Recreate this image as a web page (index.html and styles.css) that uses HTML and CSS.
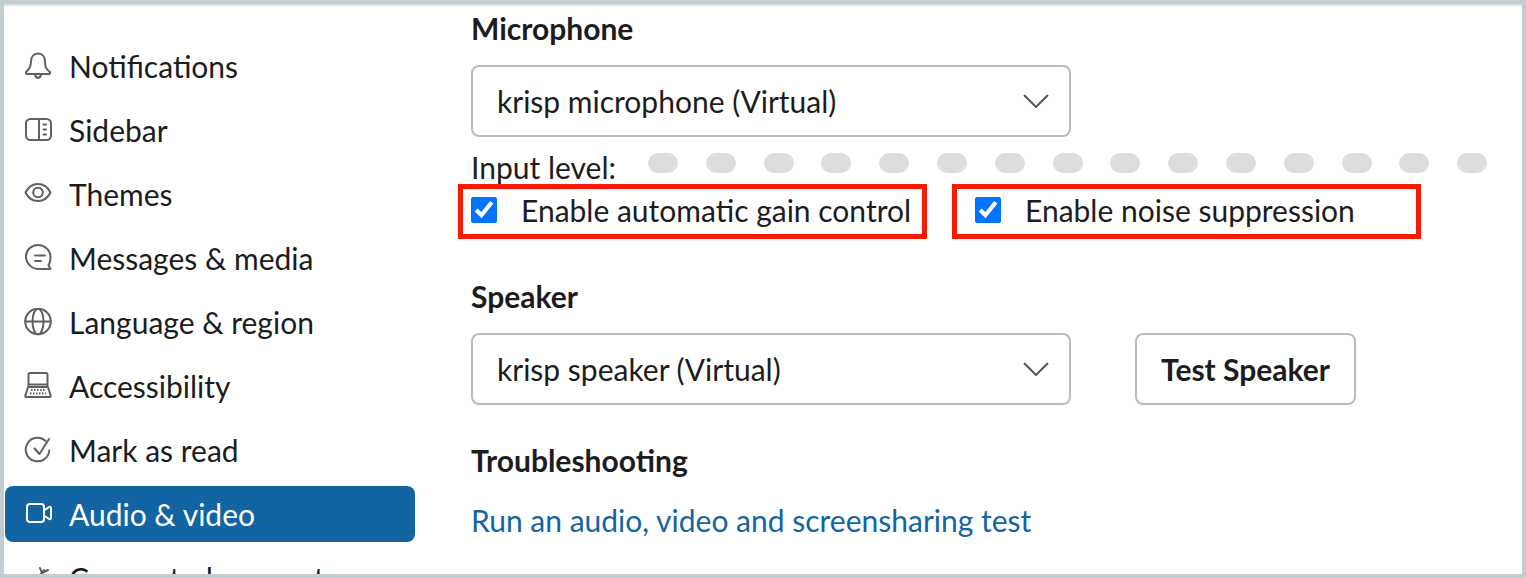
FILE: index.html
```html
<!DOCTYPE html>
<html lang="en">
<head>
<meta charset="utf-8">
<title>Preferences</title>
<link rel="stylesheet" href="styles.css">
</head>
<body>
<div class="frame">
  <nav class="sidebar">
    <a class="nav-item"><svg class="icon" viewBox="0 0 28 28"><path d="M14 1.500c-4.500 0-7 3.500-7 8 0 5.500-2 7.500-4.800 10.500-.7.800-.2 2 .8 2h22c1 0 1.500-1.200.8-2C22 17 21 15 21 9.500c0-4.500-2.500-8-7-8zM11 22.500c.3 2 1.400 3.300 3 3.300s2.700-1.300 3-3.300"/></svg><span>Notifications</span></a>
    <a class="nav-item"><svg class="icon" viewBox="0 0 28 28"><rect x="2" y="3" width="25" height="21" rx="4.500"/><path d="M15 3v21M19.500 8.500h2.500M19.500 13.500h2.500M19.500 18.500h2.500"/></svg><span>Sidebar</span></a>
    <a class="nav-item"><svg class="icon" viewBox="0 0 28 28"><path d="M1.500 12.500C4.500 6.500 9 4 14 4s9.500 2.500 12.500 8.500c-3 6-7.500 8.500-12.500 8.500S4.500 18.500 1.500 12.500z"/><circle cx="14" cy="12.500" r="4.800"/></svg><span>Themes</span></a>
    <a class="nav-item"><svg class="icon" viewBox="0 0 28 28"><path d="M14 1C7.500 1 2 6 2 12.500S7.500 25 14 25h12.500l-2-3.800c1.400-2.300 2-5 2-8.200C26.500 6 20.500 1 14 1z"/><path d="M11 11.500h10M11 17h6"/></svg><span>Messages &amp; media</span></a>
    <a class="nav-item"><svg class="icon" viewBox="0 0 28 28"><circle cx="14" cy="13.500" r="12.800"/><ellipse cx="14" cy="13.500" rx="5.500" ry="12.800"/><path d="M1.500 13.500h25"/></svg><span>Language &amp; region</span></a>
    <a class="nav-item"><svg class="icon" viewBox="0 0 28 28"><path d="M4.500 15V2.500c0-1 .5-1.500 1.500-1.500h16c1 0 1.500.5 1.500 1.500V15M1.200 24l2.800-9h20l2.800 9c0 .5-.3 1-1 1H2.200c-.7 0-1-.5-1-1zM4.500 12.500h19"/><path class="dots" d="M7 18h14M6 21.500h16"/></svg><span>Accessibility</span></a>
    <a class="nav-item"><svg class="icon" viewBox="0 0 28 28"><path d="M21.500 4.800A11.800 11.800 0 1 0 25.300 14.500"/><path d="M10.500 12.500L15.500 18 25 3"/></svg><span>Mark as read</span></a>
    <a class="nav-item active"><svg class="icon" viewBox="0 0 28 28"><rect x="3" y="4" width="17" height="18" rx="3"/><path d="M20 10.500l5-3.500c.8-.5 2 0 2 .8v10.400c0 .8-1.200 1.300-2 .8l-5-3.500"/></svg><span>Audio &amp; video</span></a>
    <a class="nav-item"><svg class="icon" viewBox="0 0 28 28"><path d="M4 26L20 6M16 4l2 5 6-3"/></svg><span>Connected accounts</span></a>
  </nav>
  <main class="content">
    <h2 class="heading first">Microphone</h2>
    <div class="select"><span>krisp microphone (Virtual)</span><svg class="chevron" viewBox="0 0 26 14"><path d="M1 1L13 13 25 1"/></svg></div>
    <div class="level">
      <span class="level-label">Input level:</span>
      <div class="dots-row">
        <i></i><i></i><i></i><i></i><i></i><i></i><i></i><i></i><i></i><i></i><i></i><i></i><i></i><i></i><i></i>
      </div>
    </div>
    <div class="options">
      <label class="option"><input type="checkbox" checked><span>Enable automatic gain control</span></label>
      <label class="option second"><input type="checkbox" checked><span>Enable noise suppression</span></label>
    </div>
    <h2 class="heading speaker">Speaker</h2>
    <div class="speaker-row">
      <div class="select"><span>krisp speaker (Virtual)</span><svg class="chevron" viewBox="0 0 26 14"><path d="M1 1L13 13 25 1"/></svg></div>
      <button class="test-btn">Test Speaker</button>
    </div>
    <h2 class="heading trouble">Troubleshooting</h2>
    <a class="link">Run an audio, video and screensharing test</a>
  </main>
</div>
</body>
</html>
```
FILE: styles.css
```css
* { box-sizing: border-box; }
html, body { margin: 0; height: 100%; }
body {
  font-family: Lato, "Liberation Sans", sans-serif;
  color: #1d1c1d;
  overflow: hidden;
}
.frame {
  width: 1526px;
  height: 578px;
  border: 4px solid #c1cdd1;
  background: #fff;
  display: flex;
  overflow: hidden;
}
.sidebar {
  width: 411px;
  flex: none;
  padding: 32px 0 0 1px;
  border-top: 2px solid #e2e2e2;
}
.nav-item {
  height: 56px;
  margin-bottom: 8px;
  padding-left: 19px;
  display: flex;
  align-items: center;
  gap: 17px;
  font-size: 30px;
  border-radius: 8px;
}
.nav-item.active {
  background: #1264a3;
  color: #fff;
}
.icon {
  width: 28px;
  height: 28px;
  flex: none;
  fill: none;
  stroke: #616061;
  stroke-width: 2;
  stroke-linecap: round;
  stroke-linejoin: round;
}
.icon .dots { stroke-dasharray: 1.500 1.500; stroke-linecap: butt; }
.active .icon { stroke: #fff; }
.content {
  flex: 1;
  min-width: 0;
  border-top: 2px solid #e2e2e2;
  padding: 0 0 0 56px;
}
.heading {
  margin: 0;
  font-size: 30px;
  font-weight: 700;
  line-height: 40px;
}
.heading.first { margin-top: 2px; }
.heading.speaker { margin-top: 37px; }
.heading.trouble { margin-top: 35px; }
.select {
  width: 600px;
  height: 72px;
  margin-top: 17px;
  padding: 0 20px 0 24px;
  border: 2px solid #bbb;
  border-radius: 8px;
  display: flex;
  align-items: center;
  justify-content: space-between;
  font-size: 30px;
}
.chevron {
  width: 26px;
  height: 14px;
  fill: none;
  stroke: #555;
  stroke-width: 2;
}
.level {
  display: flex;
  height: 40px;
  margin-top: 10px;
  font-size: 30px;
  line-height: 40px;
}
.level-label { width: 177px; flex: none; }
.dots-row {
  display: flex;
  gap: 27.800px;
  padding-top: 6px;
}
.dots-row i {
  width: 30px;
  height: 20px;
  border-radius: 10px;
  background: #ddd;
}
.options {
  display: flex;
  gap: 25px;
  margin: -3px 0 0 -13px;
}
.option {
  width: 469px;
  height: 55px;
  border: 5px solid #fb1800;
  padding: 0 0 4px 8px;
  display: flex;
  align-items: center;
  gap: 24px;
  font-size: 30px;
}
.option.second { padding-left: 18px; }
.option input {
  width: 26px;
  height: 26px;
  margin: 0;
  accent-color: #0075ff;
  flex: none;
}
.speaker-row {
  display: flex;
  align-items: flex-start;
  gap: 64px;
}
.test-btn {
  width: 221px;
  height: 72px;
  margin-top: 17px;
  background: #fff;
  border: 2px solid #bbb;
  border-radius: 8px;
  font: 700 30px Lato, "Liberation Sans", sans-serif;
  color: #1d1c1d;
  padding: 0;
}
.link {
  display: block;
  margin-top: 20px;
  font-size: 30px;
  line-height: 40px;
  color: #1264a3;
}
```
